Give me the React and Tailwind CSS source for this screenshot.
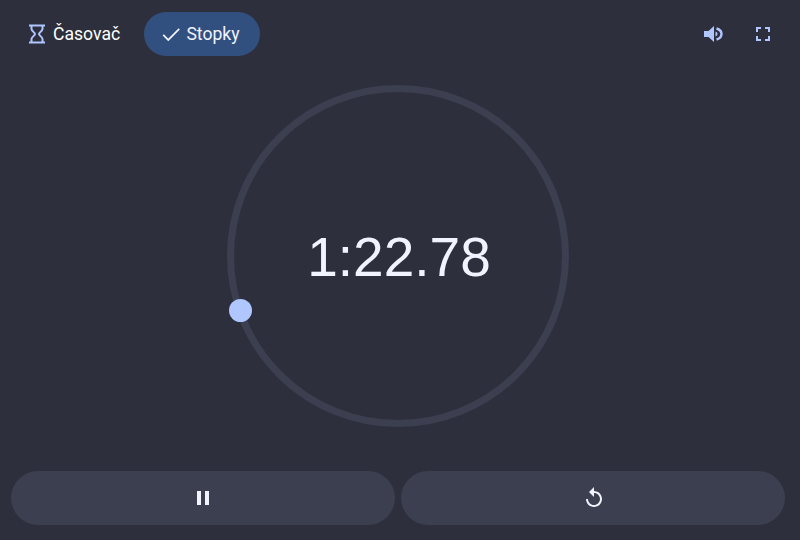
export default function App() {
  return (
    <div className="w-[800px] h-[540px] overflow-hidden bg-[#2d303c] flex flex-col pl-[11px] pr-[15px] font-['Liberation_Sans',Arial,sans-serif]">
      <div className="h-[68px] shrink-0 flex items-start justify-between pt-3">
        <div className="flex items-center gap-[5px]">
          <div className="h-11 w-[128px] flex items-center gap-[4px] pl-[14px] rounded-full text-white text-[17.6px]">
            <svg width="24" height="24" viewBox="0 0 24 24" fill="none" stroke="#b0c6ff" strokeWidth="2"><path d="M4 3.500h16M4 20.500h16M6.500 3.500v3.500c0 2 3.500 3.500 3.500 5s-3.500 3-3.500 5v3.500M17.500 3.500v3.500c0 2-3.500 3.500-3.500 5s3.500 3 3.500 5v3.500" /></svg>
            <span className="font-['Roboto',sans-serif]">Časovač</span>
          </div>
          <div className="h-11 w-[116px] flex items-center justify-center gap-[4px] rounded-full bg-[#32507f] text-[#f1f3ff] text-[17.6px]">
            <svg width="22" height="22" viewBox="0 0 24 24" fill="none" stroke="#f1f3ff" strokeWidth="1.800" className="-ml-[4px]"><path d="M3.500 13 L9 18.500 L21 6.500" /></svg>
            <span className="font-['Roboto',sans-serif]">Stopky</span>
          </div>
        </div>
        <div className="flex items-center h-11 gap-[26px] pr-[10px]">
          <svg width="24" height="24" viewBox="0 0 24 24" fill="#b0c6ff"><path d="M3 9v6h4.500l5.500 5V4L7.500 9z" /><path d="M15.500 6.500C19 7.500 20.500 9.500 20.500 12S19 16.500 15.500 17.500" fill="none" stroke="#b0c6ff" strokeWidth="2.400" /><path d="M14.500 9.500v5c1.200-.5 2-1.400 2-2.500s-.8-2-2-2.500z" /></svg>
          <svg width="24" height="24" viewBox="0 0 24 24" fill="#b0c6ff"><path d="M7 14H5v5h5v-2H7v-3zm-2-4h2V7h3V5H5v5zm12 7h-3v2h5v-5h-2v3zM14 5v2h3v3h2V5h-5z" /></svg>
        </div>
      </div>
      <div className="flex-1 flex items-start justify-center pt-[17px]">
        <div className="relative w-[342px] h-[342px] rounded-full border-[7px] border-[#3c3f4f] flex items-center justify-center">
          <span className="text-[55px] leading-none text-[#f1f3ff] pl-[2px] pt-[2px]">1:22.78</span>
          <div className="absolute left-[-5px] top-[207px] w-[23px] h-[23px] rounded-full bg-[#b0c6ff]"></div>
        </div>
      </div>
      <div className="flex gap-[6px] pb-[15px]">
        <div className="flex-1 h-[54px] rounded-[27px] bg-[#3c3f4f] flex items-center justify-center">
          <svg width="24" height="24" viewBox="0 0 24 24" fill="#f1f3ff"><path d="M6 19h4V5H6v14zm8-14v14h4V5h-4z" /></svg>
        </div>
        <div className="flex-1 h-[54px] rounded-[27px] bg-[#3c3f4f] flex items-center justify-center">
          <svg width="24" height="24" viewBox="0 0 24 24" fill="#f1f3ff" className="ml-[2px]"><path d="M12 5V1L7 6l5 5V7c3.310 0 6 2.690 6 6s-2.690 6-6 6-6-2.690-6-6H4c0 4.420 3.580 8 8 8s8-3.580 8-8-3.580-8-8-8z" /></svg>
        </div>
      </div>
    </div>
  );
}
